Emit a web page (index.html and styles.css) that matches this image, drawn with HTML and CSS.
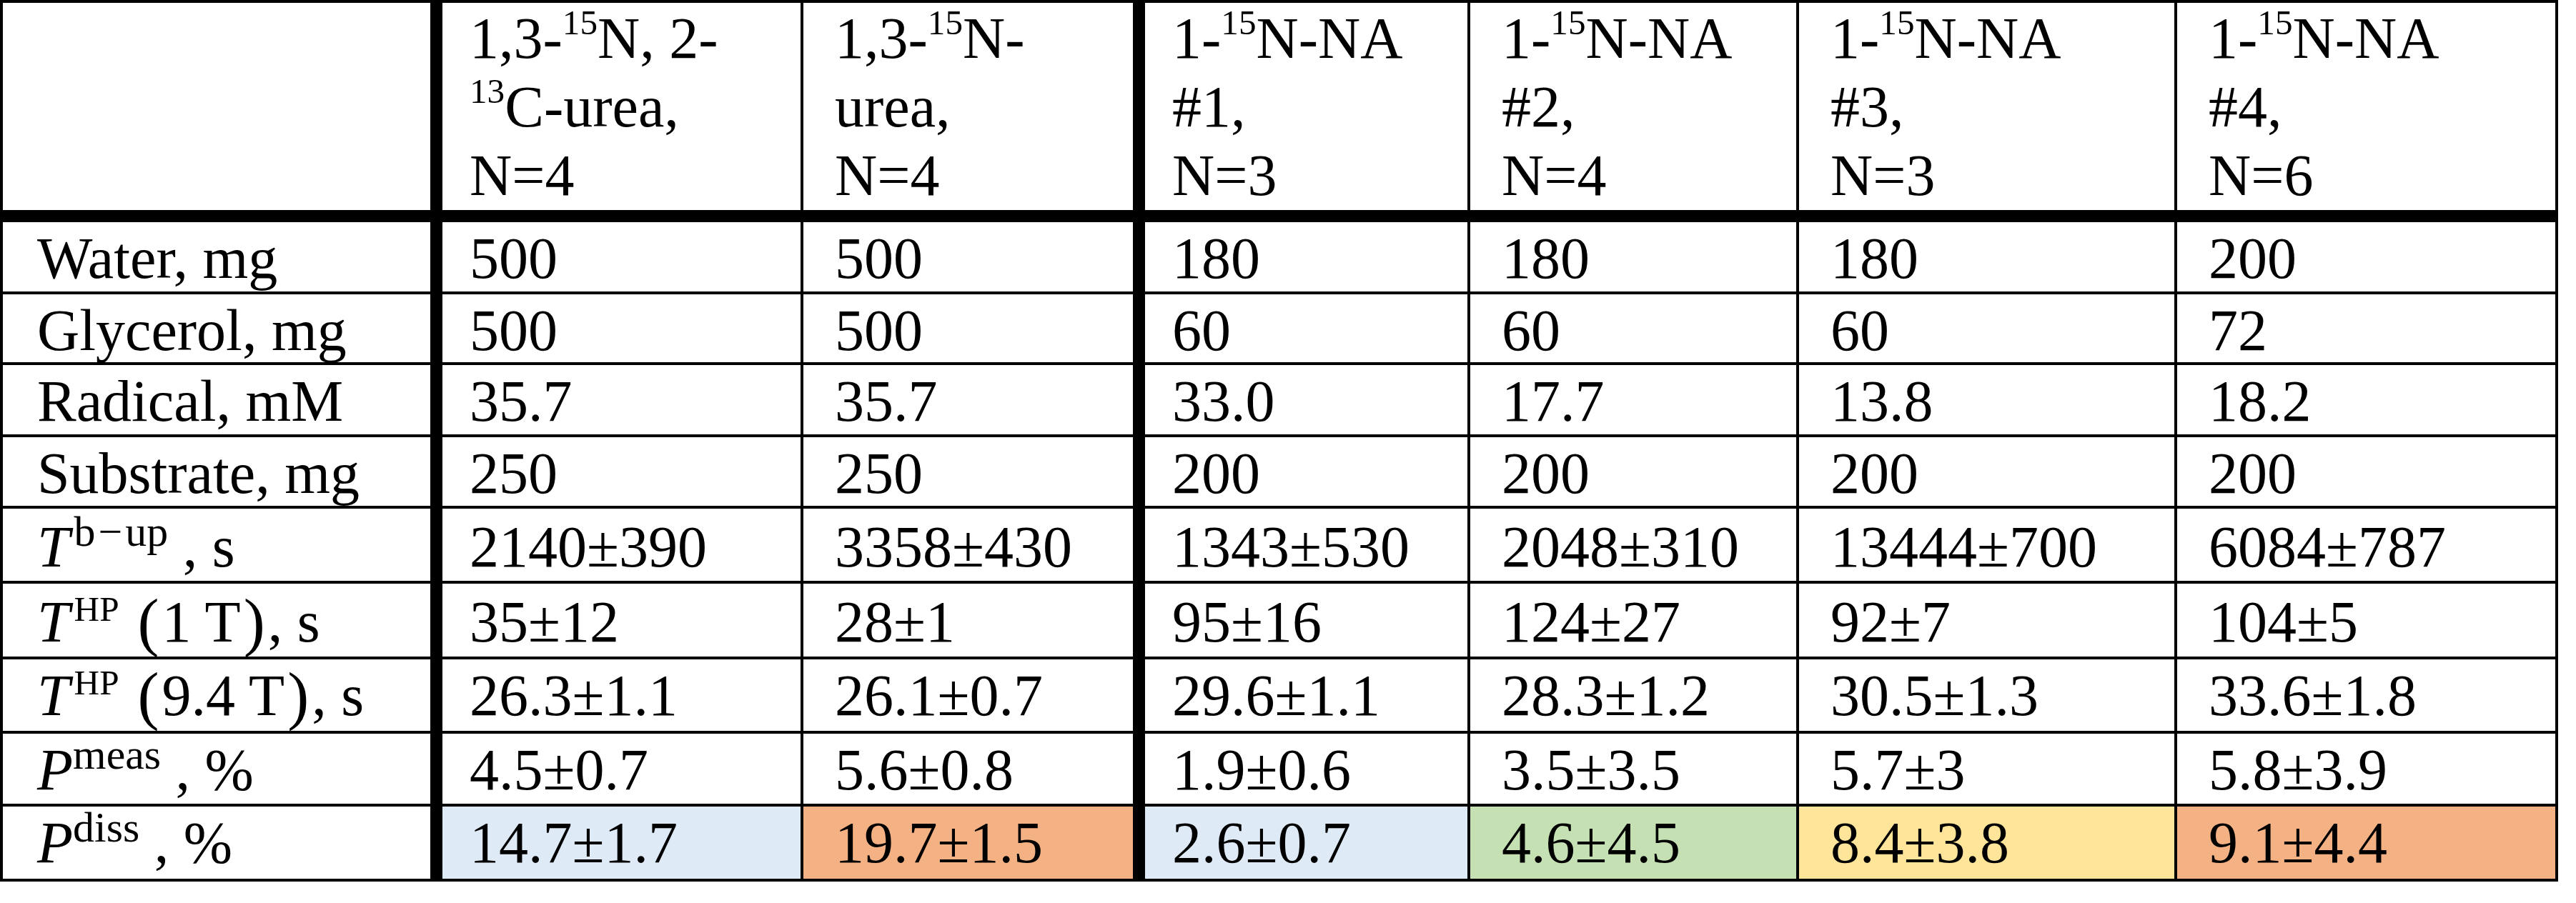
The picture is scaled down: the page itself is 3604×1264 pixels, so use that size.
FILE: index.html
```html
<!DOCTYPE html>
<html lang="en">
<head>
    <meta charset="UTF-8">
    <title>Sample preparation and polarization</title>
    <link rel="stylesheet" href="styles.css">
</head>
<body>
    <table class="data-table">
        <colgroup>
            <col class="c-label">
            <col class="c-urea13">
            <col class="c-urea">
            <col class="c-na1">
            <col class="c-na2">
            <col class="c-na3">
            <col class="c-na4">
        </colgroup>
        <thead>
            <tr class="r-head">
                <th class="first thick-right"></th>
                <th class="after-thick">1,3-<sup class="iso">15</sup>N, 2-<br><sup class="iso">13</sup>C-urea,<br>N=4</th>
                <th class="thick-right">1,3-<sup class="iso">15</sup>N-<br>urea,<br>N=4</th>
                <th class="after-thick">1-<sup class="iso">15</sup>N-NA<br>#1,<br>N=3</th>
                <th>1-<sup class="iso">15</sup>N-NA<br>#2,<br>N=4</th>
                <th>1-<sup class="iso">15</sup>N-NA<br>#3,<br>N=3</th>
                <th>1-<sup class="iso">15</sup>N-NA<br>#4,<br>N=6</th>
            </tr>
        </thead>
        <tbody>
            <tr class="r-water">
                <td class="first thick-right">Water, mg</td>
                <td class="after-thick">500</td>
                <td class="thick-right">500</td>
                <td class="after-thick">180</td>
                <td>180</td>
                <td>180</td>
                <td>200</td>
            </tr>
            <tr class="r-glycerol">
                <td class="first thick-right">Glycerol, mg</td>
                <td class="after-thick">500</td>
                <td class="thick-right">500</td>
                <td class="after-thick">60</td>
                <td>60</td>
                <td>60</td>
                <td>72</td>
            </tr>
            <tr class="r-radical">
                <td class="first thick-right">Radical, mM</td>
                <td class="after-thick">35.7</td>
                <td class="thick-right">35.7</td>
                <td class="after-thick">33.0</td>
                <td>17.7</td>
                <td>13.8</td>
                <td>18.2</td>
            </tr>
            <tr class="r-substrate">
                <td class="first thick-right">Substrate, mg</td>
                <td class="after-thick">250</td>
                <td class="thick-right">250</td>
                <td class="after-thick">200</td>
                <td>200</td>
                <td>200</td>
                <td>200</td>
            </tr>
            <tr class="r-buildup tall">
                <td class="first thick-right"><i>T</i><sup class="idx after-t">b<span class="minus">−</span>up</sup> , s</td>
                <td class="after-thick">2140±390</td>
                <td class="thick-right">3358±430</td>
                <td class="after-thick">1343±530</td>
                <td>2048±310</td>
                <td>13444±700</td>
                <td>6084±787</td>
            </tr>
            <tr class="r-hp1 tall">
                <td class="first thick-right"><i>T</i><sup class="idx after-t hp">HP</sup><span class="paren">(</span>1 T<span class="paren">)</span>, s</td>
                <td class="after-thick">35±12</td>
                <td class="thick-right">28±1</td>
                <td class="after-thick">95±16</td>
                <td>124±27</td>
                <td>92±7</td>
                <td>104±5</td>
            </tr>
            <tr class="r-hp9">
                <td class="first thick-right"><i>T</i><sup class="idx after-t hp">HP</sup><span class="paren">(</span>9.4 T<span class="paren">)</span>, s</td>
                <td class="after-thick">26.3±1.1</td>
                <td class="thick-right">26.1±0.7</td>
                <td class="after-thick">29.6±1.1</td>
                <td>28.3±1.2</td>
                <td>30.5±1.3</td>
                <td>33.6±1.8</td>
            </tr>
            <tr class="r-meas">
                <td class="first thick-right"><i>P</i><sup class="idx">meas</sup> , %</td>
                <td class="after-thick">4.5±0.7</td>
                <td class="thick-right">5.6±0.8</td>
                <td class="after-thick">1.9±0.6</td>
                <td>3.5±3.5</td>
                <td>5.7±3</td>
                <td>5.8±3.9</td>
            </tr>
            <tr class="r-diss">
                <td class="first thick-right"><i>P</i><sup class="idx">diss</sup> , %</td>
                <td class="after-thick fill-blue">14.7±1.7</td>
                <td class="thick-right fill-orange">19.7±1.5</td>
                <td class="after-thick fill-blue">2.6±0.7</td>
                <td class="fill-green">4.6±4.5</td>
                <td class="fill-yellow">8.4±3.8</td>
                <td class="fill-orange">9.1±4.4</td>
            </tr>
        </tbody>
    </table>
</body>
</html>
```

FILE: styles.css
```css
body {
    margin: 0;
    background-color: white;
    color: black;
    font-family: "Liberation Serif", "Times New Roman", serif;
}
.data-table {
    border-collapse: separate;
    border-spacing: 0;
    table-layout: fixed;
    width: 3579px;
    font-size: 82px;
}
.c-label { width: 619px; }
.c-urea13 { width: 505px; }
.c-urea { width: 478px; }
.c-na1 { width: 455px; }
.c-na2 { width: 460px; }
.c-na3 { width: 529px; }
.c-na4 { width: 533px; }

th, td {
    box-sizing: border-box;
    border-right: 4px solid black;
    border-bottom: 4px solid black;
    padding: 11px 0 0 44px;
    vertical-align: top;
    text-align: left;
    font-weight: normal;
    line-height: 80px;
    white-space: nowrap;
}
th {
    border-top: 4px solid black;
    border-bottom-width: 17px;
    line-height: 96px;
    padding-top: 2px;
}
.first {
    border-left: 4px solid black;
    padding-left: 48px;
}
.thick-right {
    border-right-width: 17px;
}
.after-thick {
    padding-left: 38px;
}
.tall td {
    padding-top: 14px;
}

.r-head { height: 309px; }
.r-water { height: 101px; }
.r-glycerol { height: 99px; }
.r-radical { height: 101px; }
.r-substrate { height: 100px; }
.r-buildup { height: 105px; }
.r-hp1 { height: 106px; }
.r-hp9 { height: 104px; }
.r-meas { height: 102px; }
.r-diss { height: 105px; }

/* isotope labels in the header */
.iso {
    font-size: 0.6em;
    vertical-align: 33px;
    line-height: 0;
}
/* superscripts in the row labels */
.idx {
    font-size: 0.73em;
    vertical-align: 29px;
    line-height: 0;
}
.idx.after-t {
    margin-left: 6px;
}
.idx .minus {
    margin: 0 4px;
}
.idx.hp {
    font-size: 0.6em;
    margin-right: 22px;
}
/* equation brackets are a little taller than the text */
.paren {
    font-size: 1.1em;
    line-height: 0;
    vertical-align: -3px;
    margin: 0 4px;
}

.fill-blue { background-color: #deeaf6; }
.fill-orange { background-color: #f4b183; }
.fill-green { background-color: #c5e0b3; }
.fill-yellow { background-color: #ffe599; }
```
